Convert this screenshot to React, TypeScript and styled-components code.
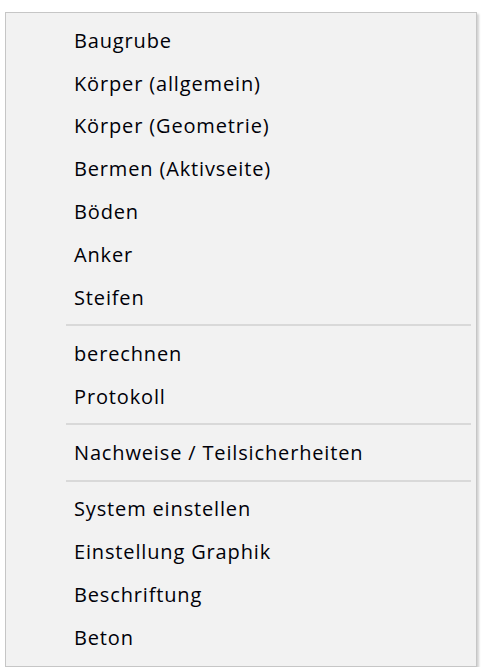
import React from "react";
import styled, { createGlobalStyle } from "styled-components";

const Global = createGlobalStyle`
  html, body { margin: 0; padding: 0; background: #ffffff; }
  body { font-family: "Open Sans", "Noto Sans", sans-serif; }
`;

const Page = styled.div`
  padding: 12px 0 0 5px;
`;

const Menu = styled.div`
  width: 466px;
  background: #f2f2f2;
  border: 1px solid #c6c6c6;
  box-shadow: 2px 2px 2px rgba(0, 0, 0, 0.18);
  padding: 6px 2px 7px 2px;
  display: flex;
  flex-direction: column;
`;

const Item = styled.div`
  height: 42.8px;
  display: flex;
  align-items: center;
  padding-left: 66px;
  font-size: 20px;
  font-weight: 500;
  color: #000008;
  letter-spacing: 0.85px;
  white-space: nowrap;
`;

const Separator = styled.div`
  height: 13.5px;
  display: flex;
  align-items: center;
  padding-left: 58px;
  padding-right: 3px;
  &::after {
    content: "";
    flex: 1;
    height: 2px;
    background: #d9d9d9;
  }
`;

type Entry = { label: string } | { sep: true };

const entries: Entry[] = [
  { label: "Baugrube" },
  { label: "Körper (allgemein)" },
  { label: "Körper (Geometrie)" },
  { label: "Bermen (Aktivseite)" },
  { label: "Böden" },
  { label: "Anker" },
  { label: "Steifen" },
  { sep: true },
  { label: "berechnen" },
  { label: "Protokoll" },
  { sep: true },
  { label: "Nachweise / Teilsicherheiten" },
  { sep: true },
  { label: "System einstellen" },
  { label: "Einstellung Graphik" },
  { label: "Beschriftung" },
  { label: "Beton" },
];

export default function App() {
  return (
    <>
      <Global />
      <Page>
        <Menu>
          {entries.map((e, i) =>
            "sep" in e ? <Separator key={i} /> : <Item key={i}>{e.label}</Item>
          )}
        </Menu>
      </Page>
    </>
  );
}
